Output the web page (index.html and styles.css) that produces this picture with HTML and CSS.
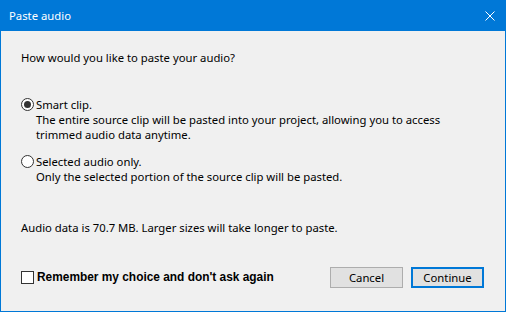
FILE: index.html
```html
<!DOCTYPE html>
<html lang="en">
<head>
    <meta charset="UTF-8">
    <title>Paste audio</title>
    <link rel="stylesheet" href="styles.css">
</head>
<body>
    <div class="window">
        <header class="titlebar">
            <span class="title">Paste audio</span>
            <svg class="close" width="10" height="10" viewBox="0 0 10 10">
                <path d="M0.5 0.5 L9.5 9.5 M9.5 0.5 L0.5 9.5" stroke="#fff" stroke-width="1" fill="none"/>
            </svg>
        </header>
        <div class="content">
            <p class="question">How would you like to paste your audio?</p>

            <div class="option first">
                <div class="option-head">
                    <span class="radio checked"></span>
                    <span>Smart clip.</span>
                </div>
                <p class="desc">The entire source clip will be pasted into your project, allowing you to access<br>trimmed audio data anytime.</p>
            </div>

            <div class="option">
                <div class="option-head">
                    <span class="radio"></span>
                    <span>Selected audio only.</span>
                </div>
                <p class="desc">Only the selected portion of the source clip will be pasted.</p>
            </div>

            <p class="size-note">Audio data is 70.7 MB. Larger sizes will take longer to paste.</p>

            <div class="footer">
                <label class="remember">
                    <span class="checkbox"></span>
                    <span>Remember my choice and don't ask again</span>
                </label>
                <div class="buttons">
                    <button class="btn">Cancel</button>
                    <button class="btn primary">Continue</button>
                </div>
            </div>
        </div>
    </div>
</body>
</html>
```

FILE: styles.css
```css
html, body {
    margin: 0;
    padding: 0;
    background: #f0f0f0;
}
body {
    font-family: "Noto Sans", "DejaVu Sans", sans-serif;
    font-size: 11.3px;
    color: #000;
}
.window {
    width: 506px;
    height: 312px;
    box-sizing: border-box;
    border: 1px solid #0078d7;
    border-top: none;
    display: flex;
    flex-direction: column;
}
.titlebar {
    height: 31px;
    background: #0078d7;
    margin: 0 -1px;
    display: flex;
    align-items: center;
    justify-content: space-between;
    padding: 0 11px 0 9px;
    color: #fff;
}
.title {
    margin-top: -1px;
}
.close {
    display: block;
}
.content {
    flex: 1;
    padding: 19px 20px 0 20px;
    display: flex;
    flex-direction: column;
    line-height: 15px;
}
p {
    margin: 0;
}
.option.first {
    margin-top: 32px;
}
.option {
    margin-top: 12px;
}
.option-head {
    display: flex;
    align-items: center;
    gap: 2px;
}
.radio {
    width: 11px;
    height: 11px;
    border: 1px solid #333;
    border-radius: 50%;
    background: #fff;
    display: inline-flex;
    align-items: center;
    justify-content: center;
}
.radio.checked::after {
    content: '';
    width: 7px;
    height: 7px;
    border-radius: 50%;
    background: #333;
}
.desc {
    padding-left: 15px;
}
.size-note {
    margin-top: 36px;
}
.footer {
    margin-top: 32px;
    display: flex;
    align-items: center;
    justify-content: space-between;
    padding-right: 1px;
}
.remember {
    display: flex;
    align-items: center;
    gap: 3px;
    font-family: "Liberation Sans", Arial, sans-serif;
    font-weight: bold;
    font-size: 11.9px;
}
.checkbox {
    width: 11px;
    height: 11px;
    border: 1px solid #333;
    background: #fff;
}
.buttons {
    display: flex;
    gap: 8px;
}
.btn {
    width: 73px;
    height: 21px;
    font-family: inherit;
    font-size: 11.3px;
    color: #000;
    background: #e1e1e1;
    border: 1px solid #adadad;
    padding: 0;
    margin: 0;
}
.btn.primary {
    border: 2px solid #0078d7;
}
```
